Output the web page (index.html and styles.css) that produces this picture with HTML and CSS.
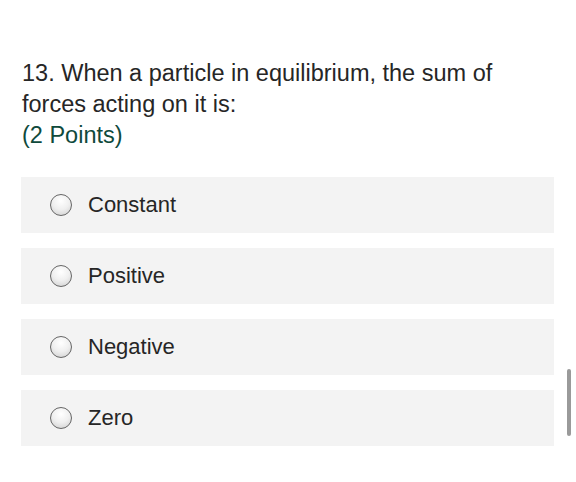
FILE: index.html
```html
<!DOCTYPE html>
<html>
<head>
<meta charset="utf-8">
<link rel="stylesheet" href="styles.css">
</head>
<body>
<div class="page">
  <div class="question">
    <div class="title">13. When a particle in equilibrium, the sum of forces acting on it is:</div>
    <div class="points">(2 Points)</div>
  </div>
  <div class="options">
    <div class="option"><span class="radio"></span><span class="label">Constant</span></div>
    <div class="option"><span class="radio"></span><span class="label">Positive</span></div>
    <div class="option"><span class="radio"></span><span class="label">Negative</span></div>
    <div class="option"><span class="radio"></span><span class="label">Zero</span></div>
  </div>
</div>
<div class="scrollbar"></div>
</body>
</html>
```
FILE: styles.css
```css
html, body {
  margin: 0;
  padding: 0;
  background: #ffffff;
  width: 576px;
  height: 482px;
  overflow: hidden;
  font-family: "Liberation Sans", Arial, sans-serif;
}
.page {
  padding: 58px 22px 0 21px;
  width: 533px;
}
.question {
  padding-left: 1px;
  font-size: 23.5px;
  line-height: 31px;
  color: #262626;
}
.title {
  width: 520px;
}
.points {
  color: #0f4a3c;
}
.options {
  margin-top: 26px;
  display: flex;
  flex-direction: column;
  gap: 15px;
}
.option {
  height: 56px;
  background: #f3f3f3;
  display: flex;
  align-items: center;
  padding-left: 29px;
}
.radio {
  width: 20px;
  height: 20px;
  border-radius: 50%;
  border: 1.5px solid #666666;
  background: radial-gradient(circle at 50% 30%, #ffffff 0%, #efefef 50%, #cccccc 100%);
  box-sizing: content-box;
  flex: none;
}
.label {
  margin-left: 16px;
  font-size: 22px;
  color: #262626;
}
.scrollbar {
  position: absolute;
  left: 567px;
  top: 369px;
  width: 4px;
  height: 67px;
  border-radius: 2px;
  background: #9a9a9a;
}
```
